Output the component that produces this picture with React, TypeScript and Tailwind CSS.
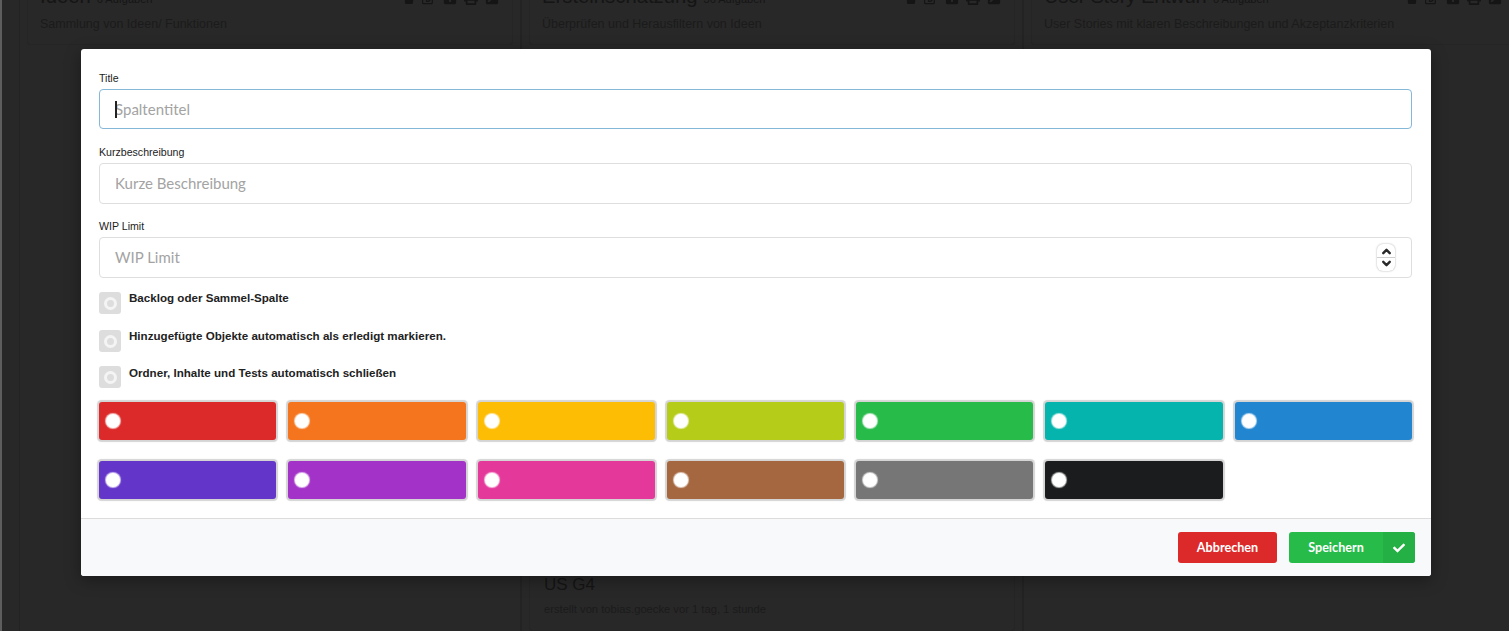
import { ChevronUp, ChevronDown } from "lucide-react";
import { FaCheck, FaTrash, FaRegEdit, FaPlusSquare, FaPrint, FaExternalLinkSquareAlt } from "react-icons/fa";

const sans = "font-['Liberation_Sans',Arial,sans-serif]";

const row1 = ["bg-[#dc2a2a]", "bg-[#f4751e]", "bg-[#fdbd05]", "bg-[#b5cc18]", "bg-[#27bb4a]", "bg-[#05b5ad]", "bg-[#2185d0]"];
const row2 = ["bg-[#6435c9]", "bg-[#a333c8]", "bg-[#e5389b]", "bg-[#a5673f]", "bg-[#767676]", "bg-[#1b1c1d]"];

function BoardIcons() {
  return (
    <div className="flex items-center gap-[7px] text-[#151515] h-[14px] pr-[1px]">
      <FaTrash size={12} />
      <FaRegEdit size={14} />
      <FaPlusSquare size={14} />
      <FaPrint size={14} />
      <FaExternalLinkSquareAlt size={14} />
    </div>
  );
}

function BoardColumn({ title, count, text, className, titleClass, children }: { title: string; count: string; text: string; className: string; titleClass?: string; children?: React.ReactNode }) {
  return (
    <div className={`border-x border-[#232323] px-[7px] h-full flex flex-col ${className}`}>
      <div className="border border-t-0 border-[#252525] rounded-b-[3px] h-[45px] shrink-0 px-[12px]">
        <div className="flex items-start justify-between -mt-[16px]">
          <div className="flex items-baseline gap-[6px] text-[#151515] whitespace-nowrap">
            <span className={`text-[20.3px] leading-[24px] ${titleClass ?? ""}`}>{title}</span>
            <span className="text-[11px] leading-[24px]">{count}</span>
          </div>
          <div className="pt-[7px]"><BoardIcons /></div>
        </div>
        <p className="text-[12.5px] leading-[16px] text-[#1b1b1b] pt-[5px] whitespace-nowrap">{text}</p>
      </div>
      {children}
    </div>
  );
}

function Field({ label, placeholder, focus, spin, className }: { label: string; placeholder: string; focus?: boolean; spin?: boolean; className?: string }) {
  return (
    <div className={className}>
      <label className={`block text-[10.6px] leading-[10px] text-[#222] mb-[6px] ${sans}`}>{label}</label>
      <div className={`rounded-[4px] border bg-white flex items-center pl-[15px] pr-[16px] font-['Lato',sans-serif] text-[15px] text-[#a3a3a3] ${focus ? "h-[40px] border-[#85b7d9]" : "h-[41px] border-[#dededf]"}`}>
        {focus && <span className="w-[1.5px] h-[17px] bg-[#222] -mr-[1.5px] relative" />}
        <span className="flex-1">{placeholder}</span>
        {spin && (
          <span className="w-[18px] h-[27px] rounded-[6px] bg-white shadow-[0_0_2px_rgba(0,0,0,0.35)] flex flex-col items-center justify-center text-[#2a2a2a]">
            <ChevronUp size={13} strokeWidth={4.5} className="-mb-[1px]" />
            <span className="w-full h-px bg-[#cfcfcf]" />
            <ChevronDown size={13} strokeWidth={4.5} className="-mt-[1px]" />
          </span>
        )}
      </div>
    </div>
  );
}

function Toggle({ label, className, textClass }: { label: string; className: string; textClass?: string }) {
  return (
    <div className={`flex items-start gap-[8px] ${className}`}>
      <span className="w-[22px] h-[22px] rounded-[3px] bg-[#dddddd] flex items-center justify-center">
        <span className="w-[13px] h-[13px] rounded-full border-[3px] border-[#f4f4f4]" />
      </span>
      <span className={`text-[11.6px] leading-[13px] font-bold text-[#222] ${sans} ${textClass ?? ""}`}>{label}</span>
    </div>
  );
}

function Swatch({ color }: { color: string }) {
  return (
    <div className={`h-[38px] rounded-[3px] shadow-[0_0_1px_1.5px_#d4d4d4] flex items-center pl-[7px] ${color}`}>
      <span className="w-[14px] h-[14px] rounded-full bg-white shadow-[0_0_1px_1px_rgba(255,255,255,0.7)]" />
    </div>
  );
}

export default function App() {
  return (
    <div className={`relative w-[1509px] h-[631px] overflow-hidden bg-[#282828] ${sans}`}>
      <div className="flex h-full border-l-2 border-[#5e5e5e]">
        <div className="w-[17px] shrink-0" />
        <BoardColumn title="Ideen" count="6 Aufgaben" text="Sammlung von Ideen/ Funktionen" className="w-[502px] shrink-0" />
        <BoardColumn title="Ersteinschätzung" count="36 Aufgaben" text="Überprüfen und Herausfiltern von Ideen" className="w-[502px] shrink-0">
          <div className="flex-1 mt-[10px] border border-[#252525] rounded-[3px] pt-[518px] pl-[14px] pr-[13px]">
            <div className="text-[17px] leading-[22px] text-[#151515]">US G4</div>
            <div className="text-[11.2px] leading-[14px] mt-[6px] text-[#1b1b1b] whitespace-nowrap">erstellt von tobias.goecke vor 1 tag, 1 stunde</div>
          </div>
        </BoardColumn>
        <BoardColumn title="User Story Entwurf" count="0 Aufgaben" text="User Stories mit klaren Beschreibungen und Akzeptanzkriterien" titleClass="tracking-[-0.4px]" className="w-[500px] shrink-0 border-r-0" />
      </div>

      <div className="absolute left-[81px] top-[49px] w-[1350px] h-[527px] bg-white rounded-[3px] shadow-[0_4px_16px_rgba(0,0,0,0.35)] flex flex-col">
        <div className="flex-1 pt-[24px] pl-[18px] pr-[19px]">
          <Field label="Title" placeholder="Spaltentitel" focus />
          <Field label="Kurzbeschreibung" placeholder="Kurze Beschreibung" className="mt-[18px]" />
          <Field label="WIP Limit" placeholder="WIP Limit" className="mt-[17px]" spin />
          <Toggle label="Backlog oder Sammel-Spalte" className="mt-[14px]" textClass="-mt-[1px]" />
          <Toggle label="Hinzugefügte Objekte automatisch als erledigt markieren." className="mt-[16px]" textClass="-mt-[1px]" />
          <Toggle label="Ordner, Inhalte und Tests automatisch schließen" className="mt-[14px]" />
          <div className="grid grid-cols-7 gap-x-[12px] gap-y-[21px] mt-[14px]">
            {row1.map((c) => <Swatch key={c} color={c} />)}
            {row2.map((c) => <Swatch key={c} color={c} />)}
          </div>
        </div>
        <div className="h-[58px] border-t border-[#dcdcdc] bg-[#f8f9fb] rounded-b-[3px] flex items-start justify-end gap-[12px] pt-[13px] pr-[16px] font-['Lato',sans-serif] text-[12.6px] font-bold text-white">
          <button className="w-[99px] h-[31px] leading-[31px] rounded-[3px] bg-[#dc2a2a]">Abbrechen</button>
          <button className="w-[126px] h-[31px] rounded-[3px] bg-[#27bb4a] flex overflow-hidden">
            <span className="flex-1 leading-[31px]">Speichern</span>
            <span className="w-[32px] h-full bg-[#25b046] flex items-center justify-center">
              <FaCheck size={12} />
            </span>
          </button>
        </div>
      </div>
    </div>
  );
}
